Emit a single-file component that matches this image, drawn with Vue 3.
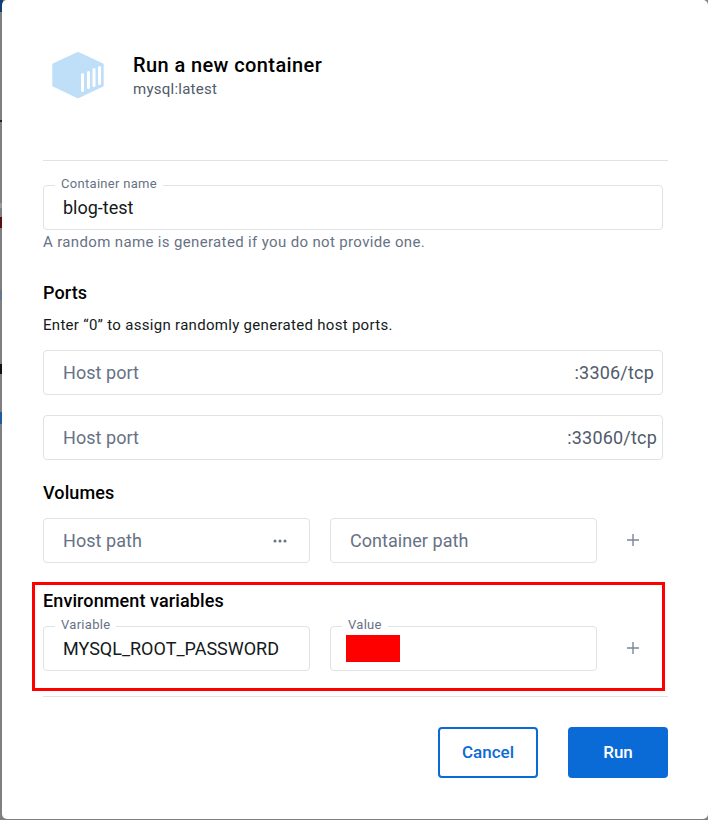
<script setup>
const ports = [
  { label: ':3306/tcp', inset: 8 },
  { label: ':33060/tcp', inset: 5 }
]
const marks = [
  { top: 0, height: 12, color: '#0f3f78' },
  { top: 120, height: 2, color: '#222222' },
  { top: 203, height: 5, color: '#9a9a9a' },
  { top: 217, height: 11, color: '#5a0f12' },
  { top: 290, height: 10, color: '#66788c' },
  { top: 364, height: 10, color: '#111111' },
  { top: 412, height: 12, color: '#1d5c9e' }
]
</script>

<template>
  <div class="backdrop">
    <span
      v-for="m in marks"
      :key="m.top"
      class="bg-mark"
      :style="{ top: m.top + 'px', height: m.height + 'px', background: m.color }"
    ></span>
    <div class="dialog">
      <header class="head">
        <svg class="logo" width="54" height="50" viewBox="0 0 54 50">
          <path fill="#bfdef8" stroke="#bfdef8" stroke-width="2" stroke-linejoin="round" d="M27 3 L51.7 14.3 V35.7 L27 47.3 L2.3 35.7 V14.3 Z" />
          <g fill="#fff">
            <rect x="30" y="23" width="3" height="19" rx="1.5" />
            <rect x="36" y="21" width="3" height="18" rx="1.5" />
            <rect x="41.5" y="18" width="3" height="19" rx="1.5" />
            <rect x="47" y="16" width="3" height="19" rx="1.5" />
          </g>
        </svg>
        <div>
          <div class="title">Run a new container</div>
          <div class="subtitle">mysql:latest</div>
        </div>
      </header>
      <hr class="rule" />
      <div class="body">
        <div class="field">
          <span class="legend">Container name</span>
          <span class="val">blog-test</span>
        </div>
        <p class="hint">A random name is generated if you do not provide one.</p>

        <h3 class="sec ports">Ports</h3>
        <p class="desc">Enter “0” to assign randomly generated host ports.</p>
        <div class="field port" v-for="p in ports" :key="p.label" :style="{ paddingRight: p.inset + 'px' }">
          <span class="ph">Host port</span>
          <span class="suffix">{{ p.label }}</span>
        </div>

        <h3 class="sec vols">Volumes</h3>
        <div class="row">
          <div class="field half">
            <span class="ph">Host path</span>
            <svg class="dots" width="14" height="4" viewBox="0 0 14 4"><circle cx="2" cy="2" r="1.5" /><circle cx="7" cy="2" r="1.5" /><circle cx="12" cy="2" r="1.5" /></svg>
          </div>
          <div class="field half"><span class="ph">Container path</span></div>
          <svg class="plus" width="12" height="12" viewBox="0 0 12 12"><path d="M6 0v12M0 6h12" /></svg>
        </div>

        <h3 class="sec envs">Environment variables</h3>
        <div class="row env">
          <div class="field half">
            <span class="legend">Variable</span>
            <span class="val">MYSQL_ROOT_PASSWORD</span>
          </div>
          <div class="field half">
            <span class="legend">Value</span>
            <span class="redact"></span>
          </div>
          <svg class="plus" width="12" height="12" viewBox="0 0 12 12"><path d="M6 0v12M0 6h12" /></svg>
        </div>
      </div>
      <div class="mark"></div>
      <hr class="rule foot-rule" />
      <footer class="foot">
        <button class="btn cancel">Cancel</button>
        <button class="btn run">Run</button>
      </footer>
    </div>
  </div>
</template>

<style>
html, body { margin: 0; background: #7f7f7f; }
</style>

<style scoped>
.backdrop {
  position: relative;
  width: 708px;
  height: 820px;
  overflow: hidden;
  font-family: Roboto, "Liberation Sans", sans-serif;
  background: #7f7f7f;
}
.bg-mark { position: absolute; left: 0; width: 3px; }
.dialog {
  position: relative;
  box-sizing: border-box;
  width: 706px;
  height: 819px;
  margin-left: 2px;
  padding: 0 40px 0 41px;
  background: #fff;
  border-radius: 5px;
}
.head {
  height: 160px;
  box-sizing: border-box;
  padding: 50px 0 0 8px;
  display: flex;
  gap: 28px;
  align-items: flex-start;
}
.logo { display: block; }
.title { font-size: 20px; line-height: 24px; margin-top: 3px; font-weight: 500; color: #000; letter-spacing: 0.4px; }
.subtitle { font-size: 15px; line-height: 20px; margin-top: 2px; color: #505b6b; letter-spacing: 0.25px; }
.rule { margin: 0; border: 0; border-top: 1px solid #e1e2e6; }
.body { width: 620px; padding-top: 24px; }
.field {
  position: relative;
  box-sizing: border-box;
  height: 45px;
  border: 1px solid #e1e2e6;
  border-radius: 4px;
  padding: 0 5px 0 19px;
  display: flex;
  align-items: center;
  justify-content: space-between;
  font-size: 18px;
  background: #fff;
}
.legend {
  position: absolute;
  left: 11px;
  top: -9px;
  padding: 0 6px;
  background: #fff;
  font-size: 13px;
  line-height: 14px;
  color: #677285;
  letter-spacing: 0.3px;
}
.val { color: #141a20; }
.ph { color: #677285; letter-spacing: 0.05px; }
.suffix { color: #505b6b; letter-spacing: 0.2px; }
.hint { margin: 4px 0 0; font-size: 15px; line-height: 16px; color: #677285; letter-spacing: 0.35px; }
.sec { margin: 0; font-size: 18px; line-height: 22px; font-weight: 500; color: #000; letter-spacing: 0.1px; }
.ports { margin-top: 32px; }
.desc { margin: 13px 0 0; font-size: 15px; line-height: 16px; color: #141a20; letter-spacing: 0.3px; }
.port { margin-top: 17px; }
.port + .port { margin-top: 20px; }
.vols { margin-top: 22px; }
.row { display: flex; gap: 20px; align-items: center; margin-top: 14px; }
.half { width: 267px; flex: none; }
.dots { fill: #677285; margin-right: 17px; }
.plus { stroke: #7d8798; stroke-width: 1.4; fill: none; margin: 0 0 2px 10px; }
.envs { margin-top: 27px; }
.env { margin-top: 14px; }
.redact { position: absolute; left: 15px; top: 8px; width: 54px; height: 27px; background: #f00; }
.mark {
  position: absolute;
  left: 30px;
  top: 582px;
  width: 633px;
  height: 109px;
  box-sizing: border-box;
  border: 3px solid #f00;
  pointer-events: none;
}
.foot-rule { margin-top: 25px; }
.foot { display: flex; justify-content: flex-end; gap: 30px; padding-top: 30px; }
.btn {
  box-sizing: border-box;
  width: 100px;
  height: 51px;
  padding: 0 0 2px;
  border-radius: 4px;
  font-family: inherit;
  font-size: 17px;
  font-weight: 500;
}
.cancel { background: #fff; color: #0b6bd6; border: 2px solid #0b6bd6; }
.run { background: #0b6bd6; color: #fff; border: 0; }
</style>
